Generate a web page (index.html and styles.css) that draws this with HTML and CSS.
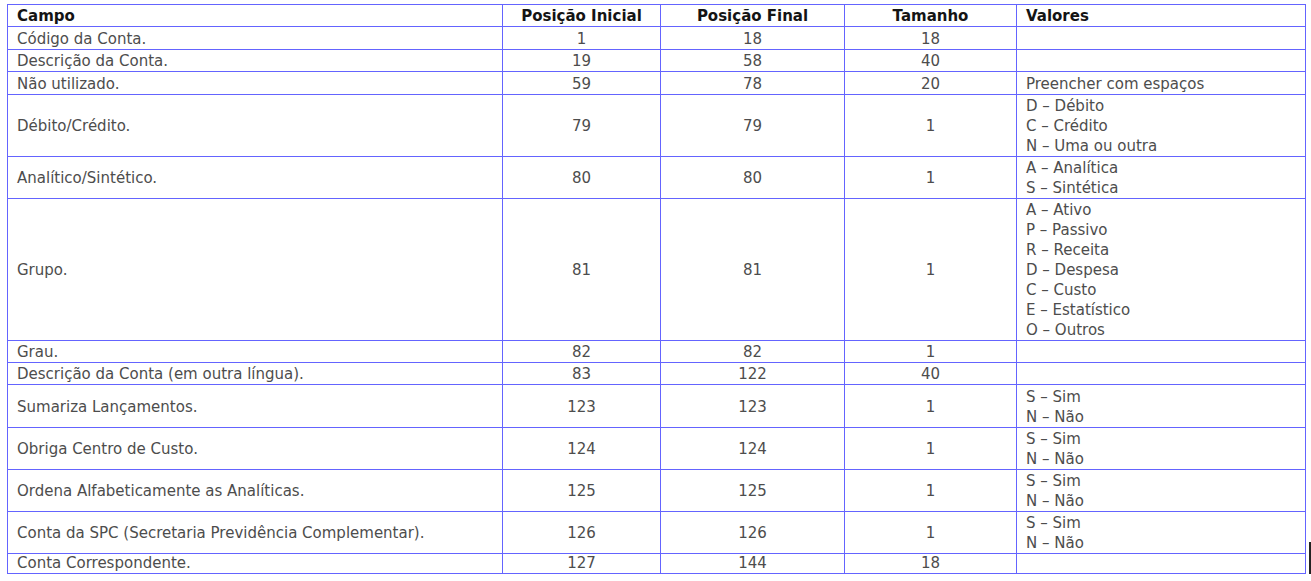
FILE: index.html
```html
<!DOCTYPE html>
<html lang="pt">
<head>
<meta charset="utf-8">
<link rel="stylesheet" href="styles.css">
<title>Layout</title>
</head>
<body>
<table class="layout">
  <colgroup>
    <col class="c-campo">
    <col class="c-ini">
    <col class="c-fim">
    <col class="c-tam">
    <col class="c-val">
  </colgroup>
  <thead>
    <tr><th class="l">Campo</th><th>Posição Inicial</th><th>Posição Final</th><th>Tamanho</th><th class="l">Valores</th></tr>
  </thead>
  <tbody>
    <tr class="tall"><td>Código da Conta.</td><td class="n">1</td><td class="n">18</td><td class="n">18</td><td></td></tr>
    <tr><td>Descrição da Conta.</td><td class="n">19</td><td class="n">58</td><td class="n">40</td><td></td></tr>
    <tr class="tall"><td>Não utilizado.</td><td class="n">59</td><td class="n">78</td><td class="n">20</td><td>Preencher com espaços</td></tr>
    <tr><td>Débito/Crédito.</td><td class="n">79</td><td class="n">79</td><td class="n">1</td><td>D – Débito<br>C – Crédito<br>N – Uma ou outra</td></tr>
    <tr><td>Analítico/Sintético.</td><td class="n">80</td><td class="n">80</td><td class="n">1</td><td>A – Analítica<br>S – Sintética</td></tr>
    <tr><td>Grupo.</td><td class="n">81</td><td class="n">81</td><td class="n">1</td><td>A – Ativo<br>P – Passivo<br>R – Receita<br>D – Despesa<br>C – Custo<br>E – Estatístico<br>O – Outros</td></tr>
    <tr><td>Grau.</td><td class="n">82</td><td class="n">82</td><td class="n">1</td><td></td></tr>
    <tr><td>Descrição da Conta (em outra língua).</td><td class="n">83</td><td class="n">122</td><td class="n">40</td><td></td></tr>
    <tr class="tall2"><td>Sumariza Lançamentos.</td><td class="n">123</td><td class="n">123</td><td class="n">1</td><td>S – Sim<br>N – Não</td></tr>
    <tr><td>Obriga Centro de Custo.</td><td class="n">124</td><td class="n">124</td><td class="n">1</td><td>S – Sim<br>N – Não</td></tr>
    <tr><td>Ordena Alfabeticamente as Analíticas.</td><td class="n">125</td><td class="n">125</td><td class="n">1</td><td>S – Sim<br>N – Não</td></tr>
    <tr><td>Conta da SPC (Secretaria Previdência Complementar).</td><td class="n">126</td><td class="n">126</td><td class="n">1</td><td>S – Sim<br>N – Não</td></tr>
    <tr class="short"><td>Conta Correspondente.</td><td class="n">127</td><td class="n">144</td><td class="n">18</td><td></td></tr>
  </tbody>
</table>
<div class="caret"></div>
</body>
</html>
```
FILE: styles.css
```css
html, body {
  margin: 0;
  padding: 0;
  background: #ffffff;
}
body {
  font-family: "DejaVu Sans", "Liberation Sans", sans-serif;
  position: relative;
  width: 1311px;
  height: 581px;
  overflow: hidden;
}
.layout {
  margin: 4px 0 0 7px;
  border-collapse: collapse;
  table-layout: fixed;
  width: 1298px;
  font-size: 15px;
  line-height: 20px;
  color: #4d4d4d;
}
.c-campo { width: 495px; }
.c-ini { width: 158px; }
.c-fim { width: 184px; }
.c-tam { width: 172px; }
.c-val { width: 289px; }
.layout th,
.layout td {
  border: 1px solid #6464ff;
  padding: 1px 0 0 9px;
  vertical-align: middle;
  text-align: left;
  white-space: nowrap;
}
.layout th {
  font-weight: bold;
  color: #141414;
  text-align: center;
  padding-left: 0;
}
.layout th.l {
  text-align: left;
  padding-left: 9px;
}
.layout td.n {
  text-align: center;
  padding-left: 0;
}
.layout tr.tall td {
  padding-top: 2px;
}
.layout tr.tall2 td {
  padding-top: 2px;
}
.layout tr.short td {
  padding-top: 0;
  line-height: 19px;
}
.caret {
  position: absolute;
  left: 1309px;
  top: 542px;
  width: 2px;
  height: 32px;
  background: #222;
}
```
